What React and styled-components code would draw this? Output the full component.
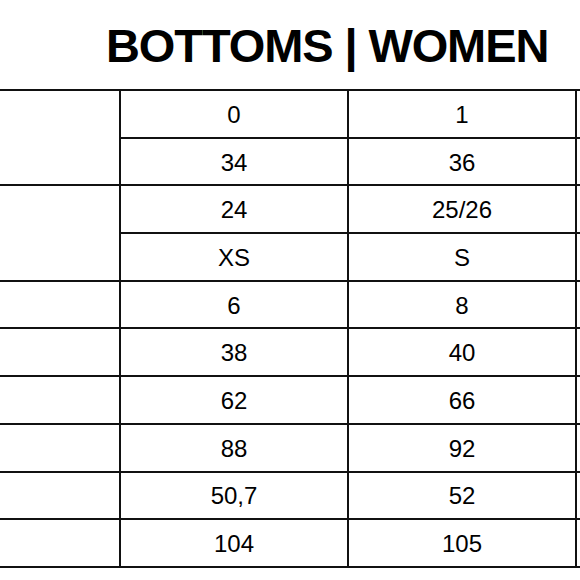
import styled, { createGlobalStyle } from 'styled-components';

const GlobalStyle = createGlobalStyle`
  html, body {
    margin: 0;
    padding: 0;
    background: #fff;
    overflow: hidden;
  }
  body {
    width: 580px;
    height: 580px;
    font-family: "Liberation Sans", Arial, Helvetica, sans-serif;
    color: #000;
  }
`;

const Page = styled.div`
  width: 580px;
  height: 580px;
  overflow: hidden;
`;

const Title = styled.h1`
  margin: 0;
  padding: 18px 0 0 106px;
  height: 89px;
  box-sizing: border-box;
  font-size: 47px;
  line-height: 56px;
  font-weight: 700;
  letter-spacing: -1.1px;
  white-space: nowrap;
  color: #000;
`;

const Table = styled.table`
  table-layout: fixed;
  width: 805px;
  border-collapse: separate;
  border-spacing: 0;
  border-top: 2px solid #111;
`;

const Cell = styled.td`
  box-sizing: border-box;
  width: ${(p) => (p.$label ? '121px' : '228px')};
  height: 47.7px;
  padding: 2px 0 0;
  border-right: 2px solid #111;
  border-bottom: 2px solid #111;
  text-align: center;
  vertical-align: middle;
  font-size: 24px;
  line-height: 28px;
  color: #000;
`;

const rows = [
  ['0', '1', 2],
  ['34', '36', 0],
  ['24', '25/26', 2],
  ['XS', 'S', 0],
  ['6', '8', 1],
  ['38', '40', 1],
  ['62', '66', 1],
  ['88', '92', 1],
  ['50,7', '52', 1],
  ['104', '105', 1],
];

export default function App() {
  return (
    <Page>
      <GlobalStyle />
      <Title>BOTTOMS | WOMEN</Title>
      <Table>
        <tbody>
          {rows.map(([a, b, span], i) => (
            <tr key={i}>
              {span > 0 && <Cell $label rowSpan={span} />}
              <Cell>{a}</Cell>
              <Cell>{b}</Cell>
              <Cell />
            </tr>
          ))}
        </tbody>
      </Table>
    </Page>
  );
}
